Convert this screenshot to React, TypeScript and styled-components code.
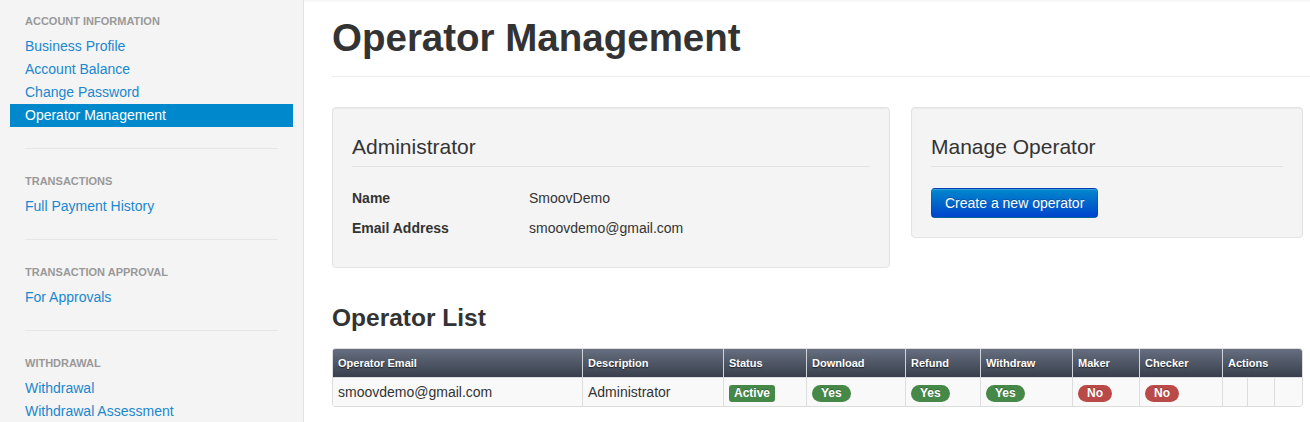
import React from 'react'
import styled, { createGlobalStyle } from 'styled-components'

const GlobalStyle = createGlobalStyle`
  html, body {
    margin: 0;
    padding: 0;
    background: #fff;
    font-family: "Liberation Sans", Arial, sans-serif;
    font-size: 14px;
    color: #333;
  }
  * {
    box-sizing: border-box;
  }
`

const Layout = styled.div`
  display: flex;
  min-height: 100vh;
`

const Sidebar = styled.aside`
  flex: 0 0 304px;
  background: #f4f4f4;
  border-right: 1px solid #e1e1e1;
  padding: 10px 25px 0 25px;
`

const NavHeader = styled.div`
  font-size: 11px;
  font-weight: bold;
  line-height: 17px;
  padding: 3px 0;
  margin-bottom: 2px;
  color: #999;
  text-transform: uppercase;
`

const NavLink = styled.a<{ $active?: boolean }>`
  display: block;
  margin: 0 -15px;
  padding: 3px 15px;
  line-height: 17px;
  font-size: 14px;
  text-decoration: none;
  color: ${({ $active }) => ($active ? '#fff' : '#1a87cf')};
  background: ${({ $active }) => ($active ? '#0088cc' : 'transparent')};
`

const NavDivider = styled.div`
  height: 1px;
  margin: 21px 0;
  background: #e6e6e6;
`

const Main = styled.main`
  flex: 1;
  padding-left: 28px;
  box-shadow: inset 0 3px 3px -2px rgba(0, 0, 0, 0.06);
`

const PageHeader = styled.div`
  padding: 18px 0 18px;
  border-bottom: 1px solid #eee;
`

const Title = styled.h1`
  margin: 0;
  font-size: 38.5px;
  line-height: 40px;
  font-weight: bold;
  color: #333;
`

const Content = styled.div`
  padding-right: 7px;
`

const CardRow = styled.div`
  display: grid;
  grid-template-columns: 558px 1fr;
  gap: 21px;
  align-items: start;
  margin-top: 30px;
`

const Well = styled.section<{ $bottom: number }>`
  background: #f4f4f4;
  border: 1px solid #e3e3e3;
  border-radius: 4px;
  box-shadow: inset 0 1px 1px rgba(0, 0, 0, 0.04);
  padding: 19px 19px ${({ $bottom }) => $bottom}px;
`

const Legend = styled.h3`
  margin: 0;
  padding: 8px 0 7px;
  font-size: 21px;
  line-height: 24px;
  font-weight: normal;
  color: #333;
  border-bottom: 1px solid #e2e2e2;
`

const InfoList = styled.dl`
  display: grid;
  grid-template-columns: 177px 1fr;
  margin: 16px 0 0;
`

const InfoLabel = styled.dt`
  font-weight: bold;
  line-height: 20px;
  padding: 5px 0;
`

const InfoValue = styled.dd`
  margin: 0;
  line-height: 20px;
  padding: 5px 0;
`

const PrimaryButton = styled.button`
  margin-top: 21px;
  padding: 4px 13px;
  font-family: inherit;
  font-size: 14px;
  line-height: 20px;
  color: #fff;
  text-shadow: 0 -1px 0 rgba(0, 0, 0, 0.25);
  background: linear-gradient(to bottom, #0088cc, #0044cc);
  border: 1px solid #0044aa;
  border-color: rgba(0, 0, 0, 0.1) rgba(0, 0, 0, 0.1) rgba(0, 0, 0, 0.25);
  border-radius: 4px;
  box-shadow: inset 0 1px 0 rgba(255, 255, 255, 0.2);
  cursor: pointer;
`

const SectionTitle = styled.h3`
  margin: 30px 0 10px;
  font-size: 24.5px;
  line-height: 40px;
  font-weight: bold;
  color: #333;
`

const Table = styled.table`
  width: 971px;
  table-layout: fixed;
  border-collapse: separate;
  border-spacing: 0;
  border: 1px solid #ddd;
  border-left: 0;
  border-radius: 4px;
  overflow: hidden;
`

const Th = styled.th`
  text-align: left;
  font-size: 11px;
  font-weight: bold;
  line-height: 18px;
  padding: 5px 5px 5px;
  color: #fff;
  text-shadow: 0 1px 1px rgba(0, 0, 0, 0.6);
  background: linear-gradient(to bottom, #666f80, #393f4c);
  border-left: 1px solid #d0d4da;
  height: 28px;
  vertical-align: middle;
  &:first-child {
    border-left-color: #ddd;
  }
`

const Td = styled.td`
  font-size: 14px;
  line-height: 20px;
  padding: 4px 5px;
  height: 29px;
  background: #f9f9f9;
  border-left: 1px solid #ddd;
  border-top: 1px solid #ddd;
  vertical-align: middle;
`

const Label = styled.span<{ $tone: 'success' | 'important'; $pill?: boolean }>`
  display: inline-block;
  font-size: 12px;
  font-weight: bold;
  line-height: 13px;
  padding: ${({ $pill }) => ($pill ? '2px 9px' : '2px 5px')};
  border-radius: ${({ $pill }) => ($pill ? '9px' : '3px')};
  color: #fff;
  text-shadow: 0 -1px 0 rgba(0, 0, 0, 0.25);
  background: ${({ $tone }) => ($tone === 'success' ? '#468847' : '#b94a48')};
  vertical-align: middle;
`

const navSections = [
  {
    title: 'Account Information',
    links: ['Business Profile', 'Account Balance', 'Change Password', 'Operator Management'],
  },
  { title: 'Transactions', links: ['Full Payment History'] },
  { title: 'Transaction Approval', links: ['For Approvals'] },
  { title: 'Withdrawal', links: ['Withdrawal', 'Withdrawal Assessment'] },
]

const columns = [250, 141, 83, 99, 75, 92, 67, 83, 25, 27, 28]

const YesNo: React.FC<{ value: boolean }> = ({ value }) => (
  <Label $tone={value ? 'success' : 'important'} $pill>
    {value ? 'Yes' : 'No'}
  </Label>
)

const App: React.FC = () => {
  return (
    <>
      <GlobalStyle />
      <Layout>
        <Sidebar>
          {navSections.map((section, i) => (
            <div key={section.title}>
              {i > 0 && <NavDivider />}
              <NavHeader>{section.title}</NavHeader>
              {section.links.map((link) => (
                <NavLink key={link} href="#" $active={link === 'Operator Management'}>
                  {link}
                </NavLink>
              ))}
            </div>
          ))}
        </Sidebar>
        <Main>
          <PageHeader>
            <Title>Operator Management</Title>
          </PageHeader>
          <Content>
            <CardRow>
              <Well $bottom={24}>
                <Legend>Administrator</Legend>
                <InfoList>
                  <InfoLabel>Name</InfoLabel>
                  <InfoValue>SmoovDemo</InfoValue>
                  <InfoLabel>Email Address</InfoLabel>
                  <InfoValue>smoovdemo@gmail.com</InfoValue>
                </InfoList>
              </Well>
              <Well $bottom={19}>
                <Legend>Manage Operator</Legend>
                <PrimaryButton>Create a new operator</PrimaryButton>
              </Well>
            </CardRow>
            <SectionTitle>Operator List</SectionTitle>
            <Table>
              <colgroup>
                {columns.map((w, i) => (
                  <col key={i} style={{ width: w }} />
                ))}
              </colgroup>
              <thead>
                <tr>
                  <Th>Operator Email</Th>
                  <Th>Description</Th>
                  <Th>Status</Th>
                  <Th>Download</Th>
                  <Th>Refund</Th>
                  <Th>Withdraw</Th>
                  <Th>Maker</Th>
                  <Th>Checker</Th>
                  <Th colSpan={3}>Actions</Th>
                </tr>
              </thead>
              <tbody>
                <tr>
                  <Td>smoovdemo@gmail.com</Td>
                  <Td>Administrator</Td>
                  <Td>
                    <Label $tone="success">Active</Label>
                  </Td>
                  <Td>
                    <YesNo value />
                  </Td>
                  <Td>
                    <YesNo value />
                  </Td>
                  <Td>
                    <YesNo value />
                  </Td>
                  <Td>
                    <YesNo value={false} />
                  </Td>
                  <Td>
                    <YesNo value={false} />
                  </Td>
                  <Td />
                  <Td />
                  <Td />
                </tr>
              </tbody>
            </Table>
          </Content>
        </Main>
      </Layout>
    </>
  )
}

export default App
